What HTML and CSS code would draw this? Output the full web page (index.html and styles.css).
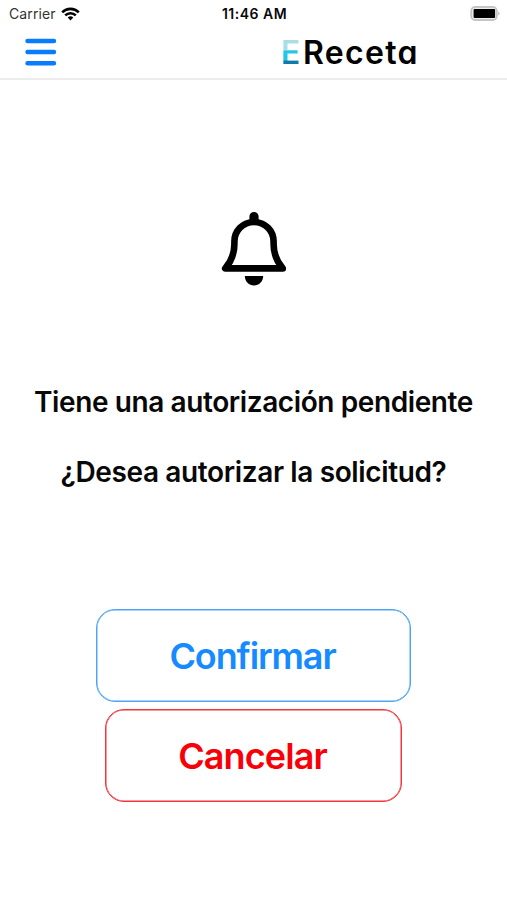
FILE: index.html
```html
<!DOCTYPE html>
<html lang="es">
<head>
<meta charset="utf-8">
<title>EReceta</title>
<link rel="stylesheet" href="styles.css">
</head>
<body>
<div class="status">
  <div class="carrier"><span>Carrier</span>
    <svg width="19" height="14" viewBox="0 0 19 14" fill="none" stroke="#000" stroke-width="2.6"><path d="M1.2 5.300a11.800 11.800 0 0 1 16.600 0M4.200 8.400a7.500 7.500 0 0 1 10.600 0"/><path d="M9.500 13.400 6.700 10.600a4 4 0 0 1 5.600 0Z" fill="#000" stroke="none"/></svg>
  </div>
  <time class="time">11:46 AM</time>
  <svg class="battery" width="31" height="15" viewBox="0 0 31 15"><rect x="1.200" y="1" width="25.600" height="13" rx="4" fill="#eee" stroke="#c5c5c5" stroke-width="1.800"/><rect x="3.600" y="3" width="21.500" height="9" rx="1"/><path d="M28.400 5.500q2.200 2 0 4z" fill="#aaa"/></svg>
</div>
<header class="bar">
  <svg class="menu" width="32" height="28" viewBox="0 0 32 28" stroke="#087bff" stroke-width="4.400" stroke-linecap="round"><path d="M2.500 3h26.500M2.500 14h26.500M2.500 25.200h26.500"/></svg>
  <div class="logo"><span class="logo-e">E</span><span class="logo-name">Receta</span></div>
</header>
<main>
  <svg class="bell" width="66" height="76" viewBox="0 0 66 76"><path d="M33 11C22 11 13.400 19.500 13.400 30.500V33C13.400 44 9.800 51 4.200 57.400H61.800C56.200 51 52.600 44 52.600 33V30.500C52.600 19.500 44 11 33 11Z" fill="none" stroke="#000" stroke-width="6.600" stroke-linejoin="round"/><path d="M28.400 10V5.500a4.600 4.600 0 0 1 9.200 0V10ZM23.800 65H42.200C42.200 70.500 38 74.500 33 74.500S23.800 70.500 23.800 65Z"/></svg>
  <p class="message">Tiene una autorización pendiente</p>
  <p class="question">¿Desea autorizar la solicitud?</p>
  <div class="actions">
    <button class="confirm">Confirmar</button>
    <button class="cancel">Cancelar</button>
  </div>
</main>
</body>
</html>
```

FILE: styles.css
```css
* { box-sizing: border-box; }
body { margin: 0; height: 900px; overflow: hidden; background: #fff; color: #080808; font-family: Inter, "Liberation Sans", sans-serif; }
.status { display: grid; grid-template-columns: 1fr auto 1fr; align-items: center; height: 27px; padding: 0 7px 0 9px; font-size: 14px; line-height: 20px; }
.carrier { display: flex; align-items: center; gap: 5px; color: #333; letter-spacing: .1px; }
.time { font-weight: 600; letter-spacing: .5px; }
.battery { justify-self: end; margin-right: -1px; }
.bar { display: flex; align-items: center; height: 53px; padding: 0 0 2px 25px; border-bottom: 2px solid #ececec; }
.logo { display: flex; margin-left: 224px; padding-top: 3px; font-size: 32px; line-height: 40px; font-weight: 600; }
.logo-e { width: 22px; color: transparent; background: linear-gradient(#a9dfe3 0 17px, #22c6e8 18px 27px, #1379ab 28px); background-clip: text; -webkit-background-clip: text; }
.logo-name { color: #000; font-feature-settings: "cv11"; letter-spacing: 1.3px; }
main { display: flex; flex-direction: column; align-items: center; padding-top: 131px; }
p { margin: 0; font-size: 28px; line-height: 40px; font-weight: 600; white-space: nowrap; }
.message { margin-top: 95px; letter-spacing: -.4px; }
.question { margin-top: 30px; letter-spacing: -.37px; }
.actions { display: flex; flex-direction: column; align-items: center; gap: 7px; margin-top: 117px; }
button { height: 93px; padding: 0 2px 0 0; border: 1px solid; border-radius: 19px; background: #fff; font: 600 36px/44px Inter, "Liberation Sans", sans-serif; }
.confirm { width: 315px; color: #168bff; border-color: #4fa5f5; letter-spacing: -1.1px; box-shadow: inset 0 0 0 .5px #4fa5f5; }
.cancel { width: 297px; color: #f80008; border-color: #f2353b; letter-spacing: -.9px; box-shadow: inset 0 0 0 .5px #f2353b; }
```
